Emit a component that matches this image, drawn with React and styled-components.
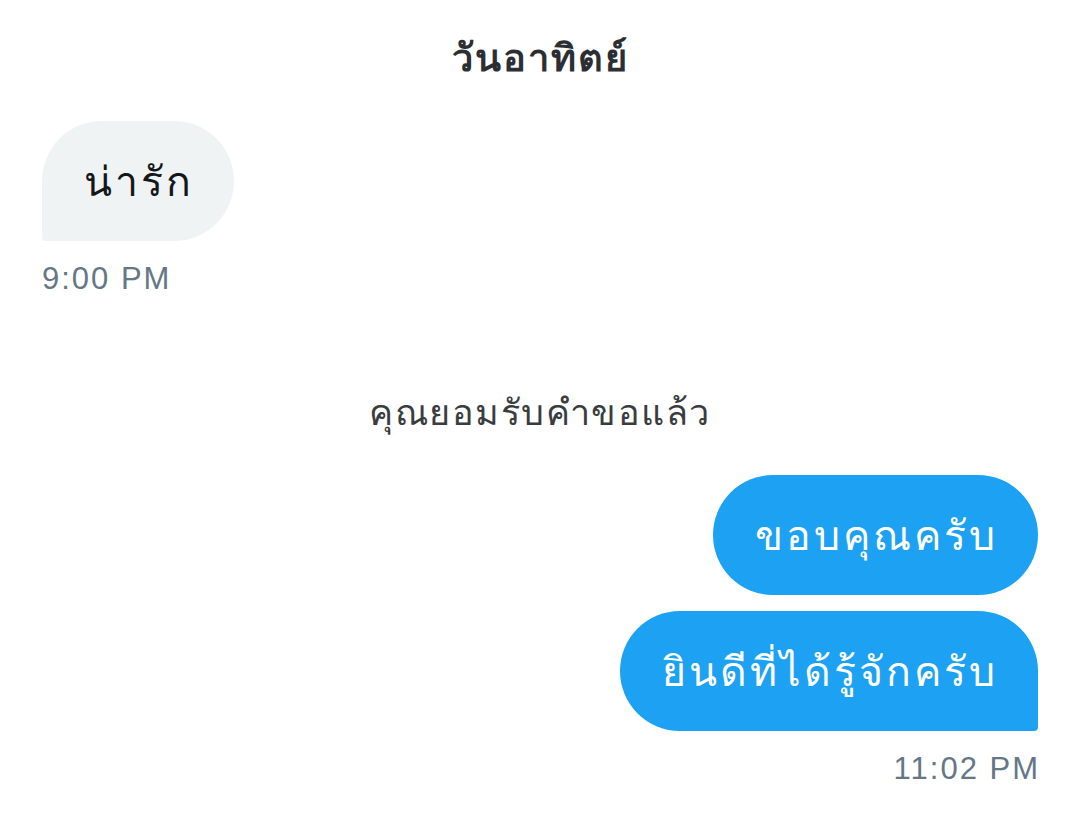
import React from 'react'
import styled, { createGlobalStyle } from 'styled-components'

const GlobalStyle = createGlobalStyle`
  html, body {
    margin: 0;
    padding: 0;
    background: #ffffff;
  }
  body {
    font-family: "Liberation Sans", "Noto Sans", "DejaVu Sans", sans-serif;
    -webkit-font-smoothing: antialiased;
  }
`

const Page = styled('div')`
  width: 1080px;
  height: 828px;
  box-sizing: border-box;
  padding: 34px 42px 0;
  display: flex;
  flex-direction: column;
  overflow: hidden;
`

const DayLabel = styled('div')`
  text-align: center;
  font-size: 38px;
  font-weight: 700;
  letter-spacing: 2px;
  line-height: 48px;
  color: #2b2f33;
`

const Group = styled('div')`
  display: flex;
  flex-direction: column;
  align-items: ${props => (props.mine ? 'flex-end' : 'flex-start')};
  gap: 16px;
  margin-top: ${props => props.top}px;
`

const Bubble = styled('div')`
  height: 120px;
  box-sizing: border-box;
  padding: 0 40px 0 42px;
  display: flex;
  align-items: center;
  font-size: 41px;
  letter-spacing: 3px;
  background: ${props => (props.mine ? '#1da1f2' : '#eff3f4')};
  color: ${props => (props.mine ? '#ffffff' : '#14171a')};
  border-radius: ${props =>
    props.tail ? (props.mine ? '60px 60px 4px 60px' : '60px 60px 60px 4px') : '60px'};
`

const Time = styled('div')`
  font-size: 31px;
  letter-spacing: 2px;
  line-height: 40px;
  color: #657786;
  margin-top: 18px;
  text-align: ${props => (props.mine ? 'right' : 'left')};
  margin-right: ${props => (props.mine ? '-2px' : '0')};
`

const Notice = styled('div')`
  text-align: center;
  font-size: 36px;
  letter-spacing: 1.5px;
  line-height: 48px;
  color: #3a3d40;
  margin-top: 90px;
`

export default function App() {
  return (
    <Page>
      <GlobalStyle />
      <DayLabel>วันอาทิตย์</DayLabel>
      <Group top={39}>
        <Bubble tail>น่ารัก</Bubble>
      </Group>
      <Time>9:00 PM</Time>
      <Notice>คุณยอมรับคำขอแล้ว</Notice>
      <Group mine top={38}>
        <Bubble mine>ขอบคุณครับ</Bubble>
        <Bubble mine tail>ยินดีที่ได้รู้จักครับ</Bubble>
      </Group>
      <Time mine>11:02 PM</Time>
    </Page>
  )
}
